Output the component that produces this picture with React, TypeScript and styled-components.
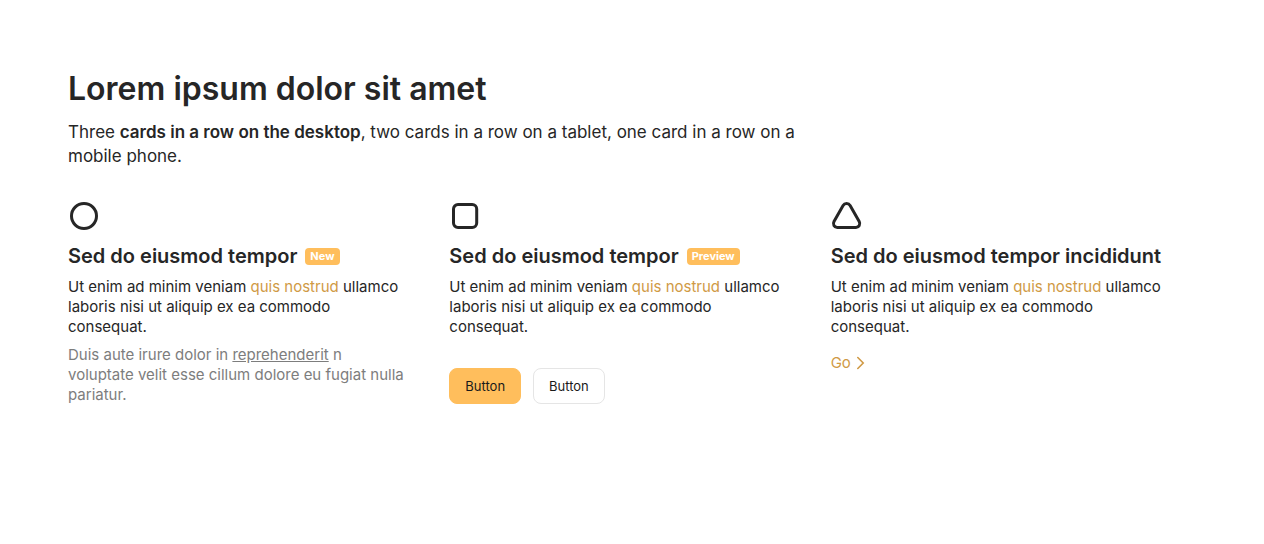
import React from "react";
import styled, { createGlobalStyle } from "styled-components";

const GlobalStyle = createGlobalStyle`
  *, *::before, *::after { box-sizing: border-box; }
  body {
    margin: 0;
    background: #fff;
    color: #262626;
    font-family: Inter, "Liberation Sans", sans-serif;
    font-size: 15px;
    line-height: 20px;
  }
  h2, h3, p { margin: 0; }
`;

const Section = styled.section`
  max-width: 1264px;
  margin: 0 auto;
  padding: 68px 52px 68px 68px;
`;

const Title = styled.h2`
  font-size: 32px;
  line-height: 42px;
  font-weight: 600;
`;

const Lead = styled.p`
  max-width: 752px;
  margin-top: 10px;
  font-size: 17px;
  line-height: 24px;

  strong { font-weight: 600; }
`;

const Cards = styled.div`
  display: grid;
  grid-template-columns: repeat(3, minmax(0, 1fr));
  margin-top: 32px;

  @media (max-width: 960px) { grid-template-columns: repeat(2, minmax(0, 1fr)); }
  @media (max-width: 600px) { grid-template-columns: minmax(0, 1fr); }
`;

const Card = styled.article`
  padding-right: 40px;
`;

const Icon = styled.svg`
  display: block;
  width: 32px;
  height: 32px;
  fill: none;
  stroke: #262626;
  stroke-width: 3;
`;

const CardTitle = styled.h3`
  display: flex;
  align-items: center;
  gap: 8px;
  margin-top: 11px;
  font-size: 20px;
  line-height: 26px;
  font-weight: 600;
  white-space: nowrap;
`;

const Badge = styled.span`
  padding: 0 5px;
  border-radius: 4px;
  background: #ffbe5c;
  color: #fff;
  font-size: 11px;
  line-height: 17px;
  font-weight: 700;
`;

const Text = styled.p<{ $muted?: boolean }>`
  margin-top: 8px;
  color: ${({ $muted }) => ($muted ? "#7d7d7d" : "inherit")};
`;

const Link = styled.a<{ $inherit?: boolean }>`
  color: ${({ $inherit }) => ($inherit ? "inherit" : "#d09a45")};
  text-decoration: ${({ $inherit }) => ($inherit ? "underline" : "none")};
`;

const MoreLink = styled(Link)`
  display: inline-flex;
  align-items: center;
  gap: 5px;
  margin-top: 16px;
`;

const Chevron = styled.svg`
  width: 9px;
  height: 14px;
  fill: none;
  stroke: currentColor;
  stroke-width: 1.6;
  stroke-linecap: round;
`;

const Actions = styled.div`
  display: flex;
  gap: 12px;
  margin-top: 31px;
`;

const Button = styled.button<{ $primary?: boolean }>`
  height: 36px;
  padding: 0 15px;
  border: 1px solid ${({ $primary }) => ($primary ? "#ffbe5c" : "#e5e5e5")};
  border-radius: 8px;
  background: ${({ $primary }) => ($primary ? "#ffbe5c" : "#fff")};
  color: #1a1a1a;
  font: inherit;
  font-size: 13px;
  cursor: pointer;
`;

const Intro = () => (
  <Text>
    Ut enim ad minim veniam <Link href="#nostrud">quis nostrud</Link> ullamco laboris nisi ut
    aliquip ex ea commodo consequat.
  </Text>
);

export default function App() {
  return (
    <>
      <GlobalStyle />
      <Section>
        <Title>Lorem ipsum dolor sit amet</Title>
        <Lead>
          Three <strong>cards in a row on the desktop</strong>, two cards in a row on a tablet, one
          card in a row on a mobile phone.
        </Lead>
        <Cards>
          <Card>
            <Icon viewBox="0 0 32 32" aria-hidden="true">
              <circle cx="16" cy="16" r="12.5" />
            </Icon>
            <CardTitle>
              Sed do eiusmod tempor <Badge>New</Badge>
            </CardTitle>
            <Intro />
            <Text $muted>
              Duis aute irure dolor in <Link $inherit href="#reprehenderit">reprehenderit</Link> n
              voluptate velit esse cillum dolore eu fugiat nulla pariatur.
            </Text>
          </Card>
          <Card>
            <Icon viewBox="0 0 32 32" aria-hidden="true">
              <rect x="4.5" y="4.5" width="23.2" height="23" rx="4.5" />
            </Icon>
            <CardTitle>
              Sed do eiusmod tempor <Badge>Preview</Badge>
            </CardTitle>
            <Intro />
            <Actions>
              <Button type="button" $primary>Button</Button>
              <Button type="button">Button</Button>
            </Actions>
          </Card>
          <Card>
            <Icon viewBox="0 0 32 32" aria-hidden="true">
              <path d="M12.1 5.5 3 21.6C1.5 24.3 3.2 27.5 6.2 27.5H25C28 27.5 29.7 24.3 28.2 21.6L19.1 5.5C17.6 2.9 13.6 2.9 12.1 5.5Z" />
            </Icon>
            <CardTitle>Sed do eiusmod tempor incididunt</CardTitle>
            <Intro />
            <MoreLink href="#go">
              Go
              <Chevron viewBox="0 0 9 14" aria-hidden="true">
                <path d="M1.8 1.5 7.2 7 1.8 12.5" />
              </Chevron>
            </MoreLink>
          </Card>
        </Cards>
      </Section>
    </>
  );
}
